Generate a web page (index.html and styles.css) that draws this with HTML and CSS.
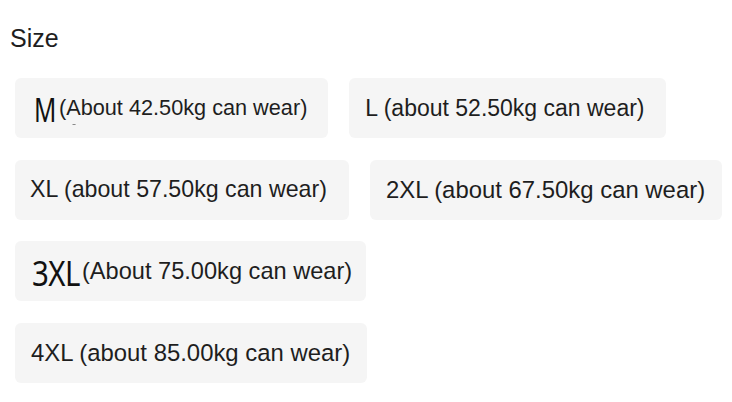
FILE: index.html
```html
<!DOCTYPE html>
<html>
<head>
<meta charset="utf-8">
<link rel="stylesheet" href="styles.css">
</head>
<body>
<div class="panel">
  <div class="title">Size</div>
  <div class="options">
    <div class="row">
      <div class="opt opt-m"><span class="big big-m">M</span><span class="note-s">(About 42.50kg can wear)</span></div>
      <div class="opt opt-l">L (about 52.50kg can wear)</div>
    </div>
    <div class="row">
      <div class="opt opt-xl">XL (about 57.50kg can wear)</div>
      <div class="opt opt-wide">2XL (about 67.50kg can wear)</div>
    </div>
    <div class="row">
      <div class="opt opt-3xl"><span class="big big-3xl">3XL</span><span class="note-l">(About 75.00kg can wear)</span></div>
    </div>
    <div class="row">
      <div class="opt opt-wide">4XL (about 85.00kg can wear)</div>
    </div>
  </div>
</div>
</body>
</html>
```
FILE: styles.css
```css
html, body {
  margin: 0;
  padding: 0;
  background: #ffffff;
}
.panel {
  font-family: "Liberation Sans", Arial, sans-serif;
  color: #1e1e1e;
  padding: 23px 0 0 10px;
}
.title {
  font-size: 25px;
  line-height: 30px;
  height: 30px;
}
.options {
  display: flex;
  flex-direction: column;
  gap: 21.5px;
  margin-top: 25px;
  padding-left: 5px;
}
.row {
  display: flex;
  gap: 21px;
}
.opt {
  display: flex;
  align-items: center;
  height: 60px;
  padding: 0 19px 0 16px;
  background: #f5f5f5;
  border-radius: 6px;
  font-size: 23px;
  white-space: nowrap;
}
.opt-l {
  padding-right: 21px;
}
.opt-xl {
  font-size: 23.2px;
  padding-left: 15px;
  padding-right: 22px;
}
.opt-wide {
  font-size: 23.9px;
  padding-right: 17px;
}
.opt-m {
  padding-right: 21px;
}
.opt-3xl {
  padding-right: 14px;
}
.note-s {
  font-size: 21.7px;
}
.note-l {
  font-size: 23.6px;
}
.big {
  position: relative;
  display: inline-block;
  font-family: "Noto Sans", "DejaVu Sans", sans-serif;
  color: #111111;
  line-height: 1;
  transform-origin: left center;
}
.big-m {
  font-size: 32px;
  width: 22px;
  margin-left: 3px;
  margin-right: 3px;
  transform: scaleX(0.77);
  top: 2px;
}
.big-m::after {
  content: "";
  position: absolute;
  left: 50px;
  top: 30px;
  width: 4px;
  height: 1px;
  background: #8a8a8a;
}
.big-3xl {
  font-size: 35px;
  width: 50px;
  margin-left: 1px;
  letter-spacing: -0.6px;
  transform: scaleX(0.84);
  top: 1px;
}
```
